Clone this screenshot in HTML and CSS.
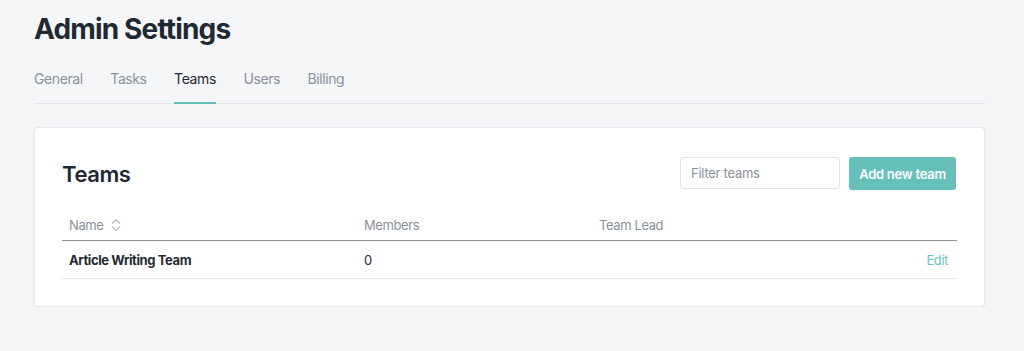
FILE: index.html
```html
<!DOCTYPE html>
<html lang="en">

<head>
    <meta charset="UTF-8">
    <meta name="viewport" content="width=device-width, initial-scale=1.0">
    <title>Admin Settings - Teams</title>
    <link rel="stylesheet" href="styles.css">
</head>

<body>
    <main class="page">
        <h1 class="page-title">Admin Settings</h1>

        <!-- Settings tabs -->
        <nav class="tabs">
            <a href="#" class="tab">General</a>
            <a href="#" class="tab">Tasks</a>
            <a href="#" class="tab active">Teams</a>
            <a href="#" class="tab">Users</a>
            <a href="#" class="tab">Billing</a>
        </nav>

        <div class="card">
            <div class="card-header">
                <h2>Teams</h2>
                <div class="card-actions">
                    <input type="text" class="filter" placeholder="Filter teams">
                    <button class="btn add">Add new team</button>
                </div>
            </div>

            <table class="team-table">
                <thead>
                    <tr>
                        <th class="col-name">
                            Name
                            <svg class="sort-icon" width="12" height="14" viewBox="0 0 12 14">
                                <path d="M2 5.5 L6 1.5 L10 5.5 M2 8.5 L6 12.5 L10 8.5" fill="none" stroke="#b4bac1" stroke-width="1.1"/>
                            </svg>
                        </th>
                        <th class="col-members">Members</th>
                        <th class="col-lead">Team Lead</th>
                        <th></th>
                    </tr>
                </thead>
                <tbody>
                    <tr>
                        <td class="team-name">Article Writing Team</td>
                        <td>0</td>
                        <td></td>
                        <td class="actions"><a href="#" class="edit-link">Edit</a></td>
                    </tr>
                </tbody>
            </table>
        </div>
    </main>
</body>

</html>
```

FILE: styles.css
```css
body {
    font-family: Inter, 'Noto Sans', sans-serif;
    letter-spacing: -0.025em;
    margin: 0;
    padding: 0;
    background-color: #f5f6f8;
    color: #1f2933;
}

.page {
    padding: 12px 39px 0 34px;
}

.page-title {
    margin: 0;
    font-size: 28px;
    line-height: 34px;
    font-weight: 700;
    letter-spacing: -0.03em;
    color: #1f2933;
}

/* Tabs */
.tabs {
    display: flex;
    gap: 27.5px;
    margin-top: 23px;
    border-bottom: 1px solid #e3e6ea;
}

.tab {
    font-size: 14px;
    line-height: 20px;
    padding-bottom: 13px;
    margin-bottom: -1px;
    border-bottom: 2px solid transparent;
    color: #8a9199;
    text-decoration: none;
}

.tab.active {
    color: #1f2933;
    border-bottom-color: #5fc0b7;
}

/* Card */
.card {
    margin-top: 23px;
    background-color: #ffffff;
    border: 1px solid #e6e8eb;
    border-radius: 4px;
    box-shadow: 0 1px 3px rgba(0, 0, 0, 0.06);
    padding: 29px 27px 27px;
}

.card-header {
    display: flex;
    align-items: center;
    justify-content: space-between;
}

.card-header h2 {
    margin: 0;
    font-size: 22px;
    font-weight: 600;
    color: #1f2933;
}

.card-actions {
    display: flex;
    gap: 9px;
    margin-right: 1px;
}

.filter {
    width: 160px;
    height: 32px;
    box-sizing: border-box;
    border: 1px solid #dfe2e6;
    border-radius: 3px;
    padding: 0 10px;
    font-family: inherit;
    font-size: 13px;
    letter-spacing: -0.02em;
    color: #1f2933;
}

.filter::placeholder {
    color: #8a9199;
}

.btn {
    border: none;
    border-radius: 3px;
    cursor: pointer;
    font-family: inherit;
    letter-spacing: -0.02em;
}

.btn.add {
    width: 107px;
    height: 33px;
    background-color: #66c0b9;
    color: #ffffff;
    font-size: 13px;
    font-weight: 600;
}

/* Table */
.team-table {
    width: 100%;
    border-collapse: collapse;
    margin-top: 18px;
    font-size: 13px;
}

.team-table th {
    text-align: left;
    font-weight: 400;
    color: #8a9199;
    padding: 9px 7px 6px;
    line-height: 17px;
    border-bottom: 1px solid #8d949c;
}

.team-table td {
    padding: 11px 7px 9px;
    line-height: 17px;
    border-bottom: 1px solid #e1e6ec;
    color: #1f2933;
}

.col-name {
    width: 281px;
}

.col-members {
    width: 221px;
}

.sort-icon {
    vertical-align: -2px;
    margin-left: 3px;
}

.team-name {
    font-weight: 700;
}

.team-table td.actions {
    text-align: right;
    padding-right: 9px;
}

.edit-link {
    color: #6cc6be;
    text-decoration: none;
}
```
